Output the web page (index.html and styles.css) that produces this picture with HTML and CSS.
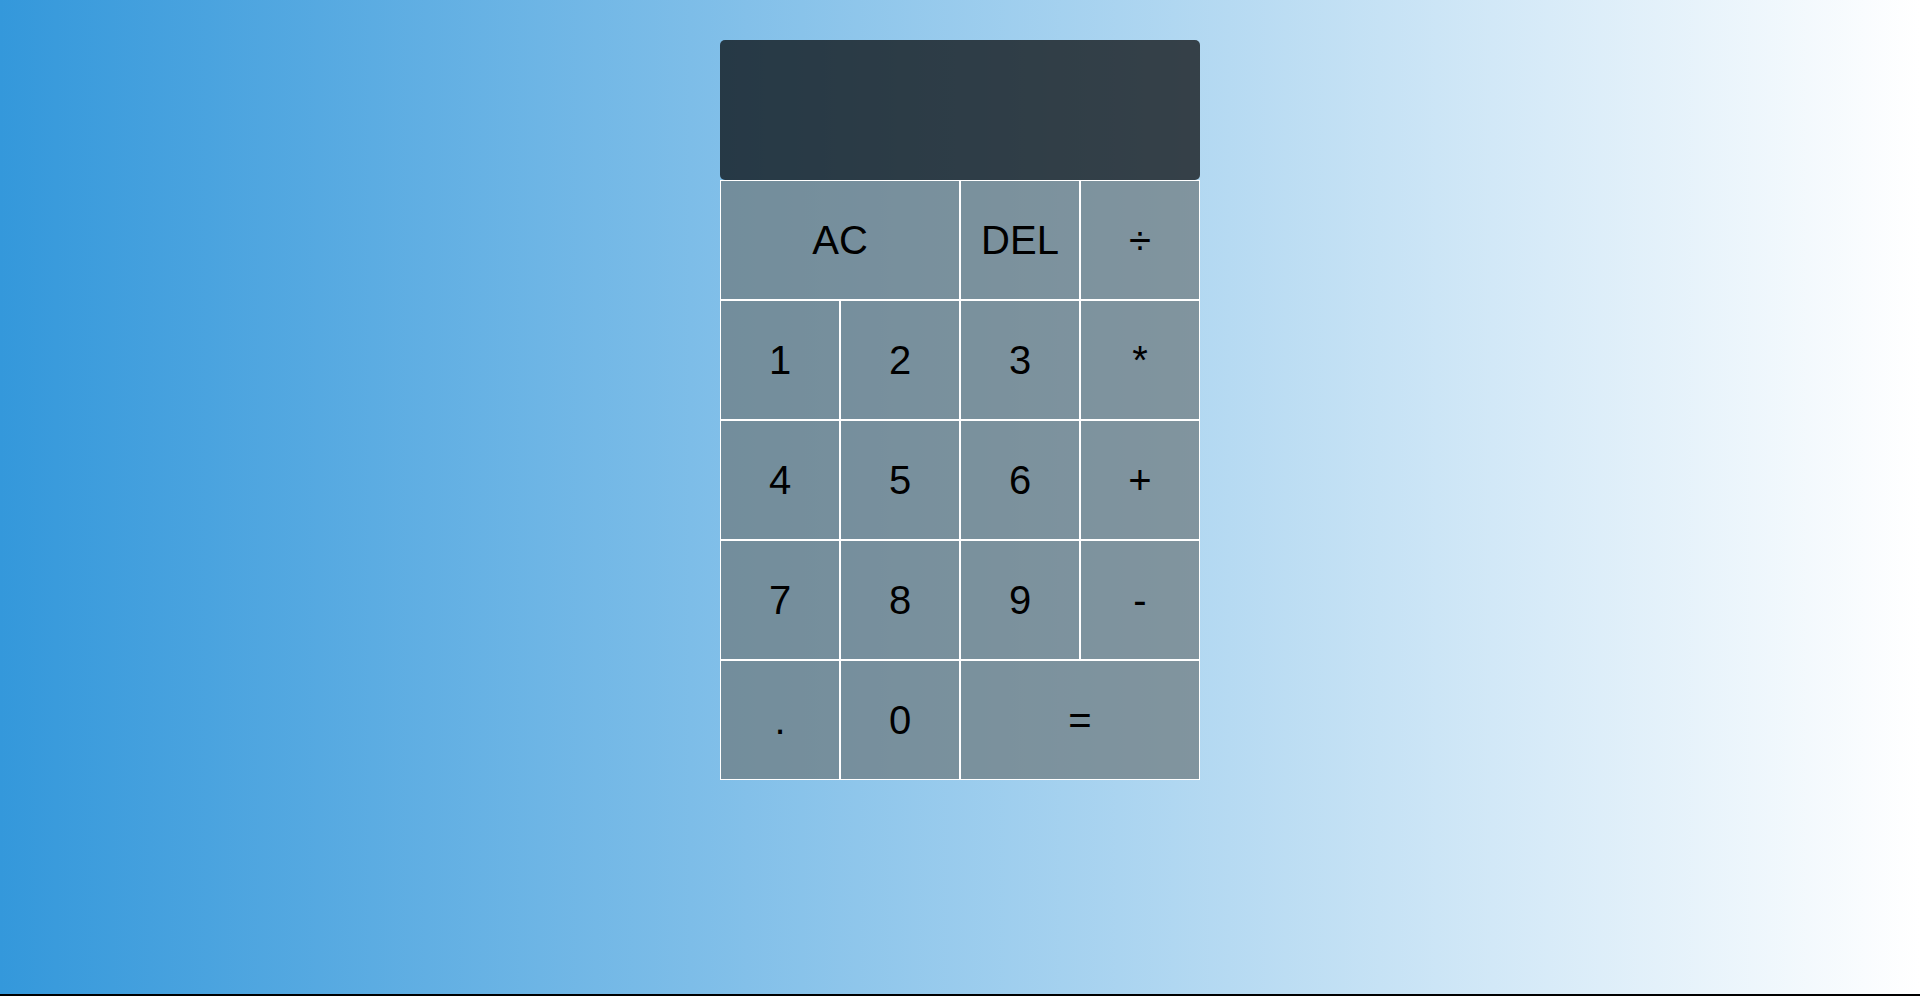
FILE: index.html
```html
<!DOCTYPE html>
<html lang="en">
<head>
<meta charset="utf-8">
<title>Calculator</title>
<link rel="stylesheet" href="styles.css">
</head>
<body>
<div class="calculator-grid">
  <div class="output">
    <div class="previous-operand"></div>
    <div class="current-operand"></div>
  </div>
  <button class="span-two">AC</button>
  <button>DEL</button>
  <button>÷</button>
  <button>1</button>
  <button>2</button>
  <button>3</button>
  <button>*</button>
  <button>4</button>
  <button>5</button>
  <button>6</button>
  <button>+</button>
  <button>7</button>
  <button>8</button>
  <button>9</button>
  <button>-</button>
  <button>.</button>
  <button>0</button>
  <button class="span-two">=</button>
</div>
</body>
</html>
```

FILE: styles.css
```css
*, *::before, *::after {
  box-sizing: border-box;
  font-family: "Liberation Sans", Arial, sans-serif;
  font-weight: normal;
}

html {
  background: #000;
}

body {
  margin: 0;
  padding: 0;
  height: 994px;
  background: linear-gradient(to right, #3498db, #ffffff);
}

.calculator-grid {
  display: grid;
  justify-content: center;
  padding-top: 40px;
  grid-template-columns: repeat(4, 120px);
  grid-template-rows: 140px repeat(5, 120px);
}

.calculator-grid > button {
  cursor: pointer;
  font-size: 40px;
  color: #000;
  border: 1px solid #fff;
  outline: none;
  padding: 0;
  background-color: rgba(110, 122, 126, 0.72);
}

.span-two {
  grid-column: span 2;
}

.output {
  grid-column: 1 / -1;
  background-color: rgba(0, 0, 0, 0.7);
  border-radius: 5px;
  display: flex;
  flex-direction: column;
  align-items: flex-end;
  justify-content: space-around;
  padding: 10px;
  word-wrap: break-word;
  word-break: break-all;
}

.previous-operand {
  color: rgba(255, 255, 255, 0.75);
  font-size: 24px;
}

.current-operand {
  color: #fff;
  font-size: 40px;
}
```
